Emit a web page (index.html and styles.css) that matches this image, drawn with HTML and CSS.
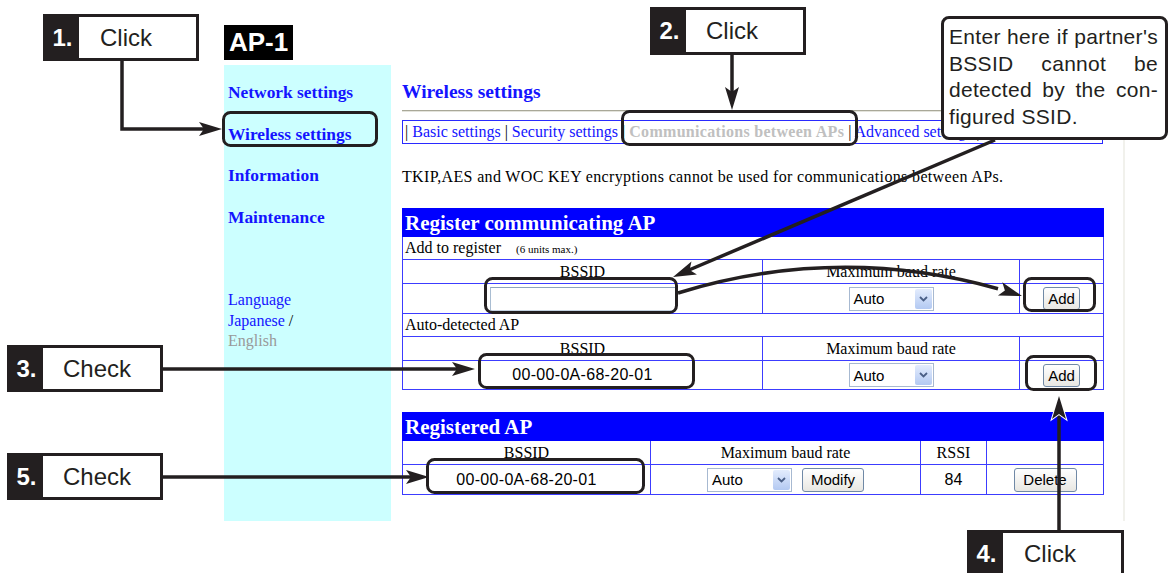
FILE: index.html
```html
<!DOCTYPE html>
<html lang="en">
<head>
<meta charset="utf-8">
<title>AP-1 Wireless settings</title>
<link rel="stylesheet" href="styles.css">
</head>
<body>
<div class="figure">
  <div class="ap-label">AP-1</div>
  <div class="screen">
    <nav class="sidebar">
      <a class="nav-item">Network settings</a>
      <a class="nav-item">Wireless settings</a>
      <a class="nav-item">Information</a>
      <a class="nav-item">Maintenance</a>
      <div class="lang">
        <div class="lang-line">Language</div>
        <div class="lang-line">Japanese <span class="slash">/</span></div>
        <div class="lang-line current">English</div>
      </div>
    </nav>
    <main class="main">
      <h1 class="page-title">Wireless settings</h1>
      <div class="rule"></div>
      <div class="tabs">| <a>Basic settings</a> | <a>Security settings</a> | <span class="tab-current">Communications between APs</span> | <a>Advanced settings</a> |</div>
      <p class="note">TKIP,AES and WOC KEY encryptions cannot be used for communications between APs.</p>

      <table class="ap-table">
        <colgroup><col class="w360"><col class="w257"><col class="w84"></colgroup>
        <tr class="r-title"><th colspan="3">Register communicating AP</th></tr>
        <tr class="r-section"><td colspan="3">Add to register <small class="max">(6 units max.)</small></td></tr>
        <tr class="r-head"><td>BSSID</td><td>Maximum baud rate</td><td></td></tr>
        <tr class="r-data">
          <td><input class="bssid-input" type="text" value=""></td>
          <td><div class="select"><span>Auto</span><span class="select-arrow"><svg width="9" height="6" viewBox="0 0 9 6"><path d="M1 1 L4.5 4.5 L8 1" fill="none" stroke="#4a5f86" stroke-width="1.8"/></svg></span></div></td>
          <td><button class="btn btn-add">Add</button></td>
        </tr>
        <tr class="r-section"><td colspan="3">Auto-detected AP</td></tr>
        <tr class="r-head"><td>BSSID</td><td>Maximum baud rate</td><td></td></tr>
        <tr class="r-data r-data2">
          <td class="mac">00-00-0A-68-20-01</td>
          <td><div class="select"><span>Auto</span><span class="select-arrow"><svg width="9" height="6" viewBox="0 0 9 6"><path d="M1 1 L4.5 4.5 L8 1" fill="none" stroke="#4a5f86" stroke-width="1.8"/></svg></span></div></td>
          <td><button class="btn btn-add">Add</button></td>
        </tr>
      </table>

      <table class="ap-table registered">
        <colgroup><col class="w248"><col class="w270"><col class="w66"><col class="w117"></colgroup>
        <tr class="r-title"><th colspan="4">Registered AP</th></tr>
        <tr class="r-head"><td>BSSID</td><td>Maximum baud rate</td><td>RSSI</td><td></td></tr>
        <tr class="r-data">
          <td class="mac">00-00-0A-68-20-01</td>
          <td><div class="rate-cell"><div class="select"><span>Auto</span><span class="select-arrow"><svg width="9" height="6" viewBox="0 0 9 6"><path d="M1 1 L4.5 4.5 L8 1" fill="none" stroke="#4a5f86" stroke-width="1.8"/></svg></span></div><button class="btn btn-modify">Modify</button></div></td>
          <td class="rssi">84</td>
          <td><button class="btn btn-delete">Delete</button></td>
        </tr>
      </table>
    </main>
  </div>
</div>

<svg class="overlay" width="1175" height="573" viewBox="0 0 1175 573">
  <g fill="none" stroke="#231f20" stroke-width="3.5">
    <path d="M122 61 V129 H206"/>
    <path d="M732 55 V92"/>
    <path d="M995 140 L689 270"/>
    <path d="M678 293 Q838 243.7 998 288.7"/>
    <path d="M163 369 H458"/>
    <path d="M163 477 H412"/>
    <path d="M1059 532 V412"/>
  </g>
  <g fill="none" stroke="#231f20" stroke-width="3">
    <rect x="223.5" y="112.5" width="153" height="33" rx="7"/>
    <rect x="622.5" y="111.5" width="234" height="33" rx="7"/>
    <rect x="485.5" y="278.5" width="191" height="34" rx="7"/>
    <rect x="1024.5" y="278.5" width="70" height="32" rx="7"/>
    <rect x="479.5" y="354.5" width="214" height="33" rx="7"/>
    <rect x="1026.5" y="356.5" width="69" height="33" rx="7"/>
    <rect x="427.5" y="459.5" width="216" height="33" rx="7"/>
  </g>
  <g fill="#231f20">
    <path transform="translate(222 129)" d="M0 0 L-23 -7 L-18 0 L-23 7 Z"/>
    <path transform="translate(732 110) rotate(90)" d="M0 0 L-23 -7 L-18 0 L-23 7 Z"/>
    <path transform="translate(673 277) rotate(157.1)" d="M0 0 L-23 -7 L-18 0 L-23 7 Z"/>
    <path transform="translate(1022 296) rotate(18)" d="M0 0 L-23 -7 L-18 0 L-23 7 Z"/>
    <path transform="translate(475 369)" d="M0 0 L-23 -7 L-18 0 L-23 7 Z"/>
    <path transform="translate(429 477)" d="M0 0 L-23 -7 L-18 0 L-23 7 Z"/>
    <path transform="translate(1059 396) rotate(-90)" d="M0 0 L-23 -7 L-18 0 L-23 7 Z" stroke="#fff" stroke-width="2" paint-order="stroke"/>
  </g>
</svg>

<div class="callout c1"><div class="num">1.</div><div class="label">Click</div></div>
<div class="callout c2"><div class="num">2.</div><div class="label">Click</div></div>
<div class="callout c3"><div class="num">3.</div><div class="label">Check</div></div>
<div class="callout c4"><div class="num">4.</div><div class="label">Click</div></div>
<div class="callout c5"><div class="num">5.</div><div class="label">Check</div></div>

<div class="callout-note">
  <div class="note-line">Enter here if partner's</div>
  <div class="note-line">BSSID cannot be</div>
  <div class="note-line">detected by the con-</div>
  <div class="note-line last">figured SSID.</div>
</div>
</body>
</html>
```

FILE: styles.css
```css
* { box-sizing: border-box; }
html, body { margin: 0; padding: 0; }
body {
  width: 1175px;
  height: 573px;
  overflow: hidden;
  position: relative;
  background: #fff;
  font-family: "Liberation Serif", "Times New Roman", serif;
  color: #000;
}

.figure { padding: 25px 0 0 224px; }

.ap-label {
  width: 69px;
  height: 35px;
  background: #000;
  color: #fff;
  font: bold 26px/35px "Liberation Sans", Arial, sans-serif;
  text-align: center;
}

.screen { display: flex; margin-top: 5px; height: 456px; }

.sidebar {
  width: 167px;
  background: #ccffff;
  padding: 17px 0 0 4px;
}
.nav-item {
  display: block;
  font-weight: bold;
  font-size: 17.4px;
  line-height: 20px;
  margin-bottom: 21.5px;
  color: #1414ff;
}
.lang { margin-top: 63.5px; font-size: 16px; line-height: 20.5px; }
.lang-line { color: #1414ff; }
.slash { color: #000; }
.lang-line.current { color: #999; }

.main {
  width: 734px;
  padding: 16px 20px 0 11px;
  border-right: 2px solid #f1f1ec;
}
.page-title {
  margin: 0;
  font-size: 19.5px;
  line-height: 22px;
  font-weight: bold;
  color: #1414ff;
}
.rule {
  margin-top: 7px;
  height: 2px;
  border-top: 1px solid #a9a898;
  border-bottom: 1px solid #e4e4dc;
}
.tabs {
  margin-top: 8px;
  height: 24px;
  border: 1px solid #2a2aff;
  padding-left: 2px;
  font-size: 16px;
  line-height: 22px;
  white-space: nowrap;
  overflow: hidden;
}
.tabs a { color: #1414ff; }
.tab-current { color: #c0c0c0; font-weight: bold; letter-spacing: 0.3px; }

.note { margin: 23px 0 21px; font-size: 16px; line-height: 20px; letter-spacing: 0.35px; white-space: nowrap; }

.ap-table {
  border-collapse: collapse;
  table-layout: fixed;
  width: 701px;
  font-size: 16px;
}
.ap-table.registered { margin-top: 22px; }
.ap-table td, .ap-table th {
  border: 1px solid #3c3cff;
  padding: 0 2px;
  vertical-align: middle;
}
.w360 { width: 360px; }
.w257 { width: 257px; }
.w84 { width: 84px; }
.w248 { width: 248px; }
.w270 { width: 270px; }
.w66 { width: 66px; }
.w117 { width: 117px; }

.r-title th {
  background: #0000ff;
  border-color: #0000ff;
  color: #fff;
  text-align: left;
  font-size: 21px;
  font-weight: bold;
  height: 28px;
  line-height: 24px;
  padding-left: 2px;
}
.r-section td { height: 23px; text-align: left; line-height: 20px; }
.r-head td { height: 24px; text-align: center; line-height: 20px; }
.r-data td { height: 30px; text-align: center; }
.r-data2 td { height: 29px; }
.max { font-size: 11px; margin-left: 11px; }

.mac, .rssi { font-family: "Liberation Sans", Arial, sans-serif; font-size: 16px; }
.mac { letter-spacing: 0.3px; }

.bssid-input {
  display: inline-block;
  vertical-align: middle;
  width: 186px;
  height: 24px;
  margin: 0;
  border: 1px solid;
  border-color: #8da3bc #b8cadb #c6d4e2 #a9bdd2;
  background: #fff;
}

.select {
  display: inline-flex;
  align-items: center;
  justify-content: space-between;
  vertical-align: middle;
  width: 85px;
  height: 24px;
  border: 1px solid #a7b9d1;
  background: #fff;
  padding: 1px 1px 1px 4px;
  font: 15px "Liberation Sans", Arial, sans-serif;
  text-align: left;
}
.select-arrow {
  width: 17px;
  height: 20px;
  border-radius: 2px;
  background: linear-gradient(#e3ecfd, #b3c9f2);
  display: flex;
  align-items: center;
  justify-content: center;
}

.btn {
  height: 23px;
  padding: 0;
  border: 1px solid #7089a6;
  border-radius: 3px;
  background: linear-gradient(#ffffff, #e8e7e2);
  color: #000;
  font: 15px "Liberation Sans", Arial, sans-serif;
  vertical-align: middle;
}
.btn-add { width: 37px; }
.btn-modify { width: 62px; height: 24px; }
.btn-delete { width: 63px; height: 24px; }

.rate-cell { display: flex; justify-content: center; align-items: center; gap: 10px; }

.overlay { position: absolute; left: 0; top: 0; z-index: 2; pointer-events: none; }

.callout {
  position: absolute;
  z-index: 3;
  display: flex;
  width: 156px;
  height: 47px;
  border: 3px solid #231f20;
  background: #fff;
  font-family: "Liberation Sans", Arial, sans-serif;
  color: #231f20;
}
.callout .num {
  width: 33px;
  background: #231f20;
  color: #fff;
  font-weight: bold;
  font-size: 24px;
  display: flex;
  align-items: center;
  justify-content: center;
}
.callout .label {
  flex: 1;
  display: flex;
  align-items: center;
  padding-left: 20px;
  font-size: 24px;
}
.c1 { left: 43px; top: 14px; }
.c1 .label { padding-left: 21px; }
.c2 { left: 650px; top: 7px; height: 48px; }
.c3 { left: 7px; top: 345px; }
.c4 { left: 967px; top: 530px; width: 157px; }
.c4 .label { padding-left: 21px; }
.c5 { left: 7px; top: 453px; }

.callout-note {
  position: absolute;
  z-index: 3;
  left: 941px;
  top: 16px;
  width: 227px;
  height: 124px;
  border: 3px solid #231f20;
  border-radius: 8px;
  background: #fff;
  padding: 5px 7px 0 5px;
  font: 21px/26.5px "Liberation Sans", Arial, sans-serif;
  letter-spacing: 0.3px;
  color: #231f20;
}
.note-line { text-align: justify; text-align-last: justify; white-space: nowrap; }
.note-line.last { text-align-last: left; }
```
